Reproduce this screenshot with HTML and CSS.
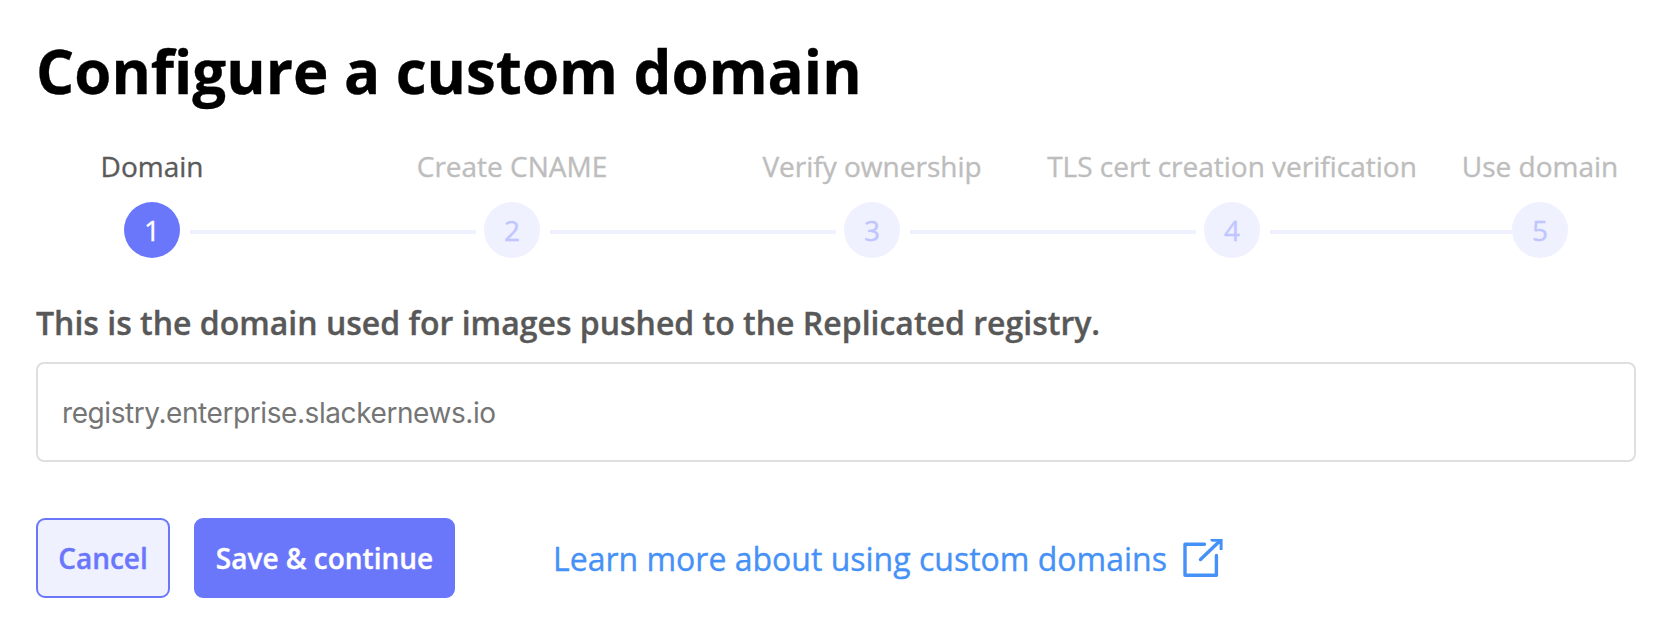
FILE: index.html
```html
<!DOCTYPE html>
<html lang="en">
<head>
<meta charset="utf-8">
<title>Configure a custom domain</title>
<link rel="stylesheet" href="styles.css">
</head>
<body>
<main class="page">
  <h1 class="title">Configure a custom domain</h1>
  <ol class="steps">
    <li class="step step-active"><span class="step-label">Domain</span><div class="step-track"><span class="step-dot">1</span><span class="step-line"></span></div></li>
    <li class="step"><span class="step-label">Create CNAME</span><div class="step-track"><span class="step-dot">2</span><span class="step-line"></span></div></li>
    <li class="step"><span class="step-label">Verify ownership</span><div class="step-track"><span class="step-dot">3</span><span class="step-line"></span></div></li>
    <li class="step step-short"><span class="step-label">TLS cert creation verification</span><div class="step-track"><span class="step-dot">4</span><span class="step-line"></span></div></li>
    <li class="step step-last"><span class="step-label">Use domain</span><div class="step-track"><span class="step-dot">5</span></div></li>
  </ol>
  <label class="field-label" for="domain">This is the domain used for images pushed to the Replicated registry.</label>
  <input class="field" id="domain" type="text" placeholder="registry.enterprise.slackernews.io">
  <div class="actions">
    <button class="button button-secondary" type="button">Cancel</button>
    <button class="button button-primary" type="button">Save &amp; continue</button>
    <a class="link" href="#"><span class="link-text">Learn more about using custom domains</span>
      <svg class="link-icon" viewBox="0 0 40 40" width="40" height="40" fill="none" stroke="currentColor" stroke-width="3.4" stroke-linecap="round" stroke-linejoin="round">
        <path d="M21.5 6.2H2V37.2H33.4V17.5"/>
        <path d="M17.5 21.5L36 3.7"/>
        <path d="M27.3 1H39.6V12H36.6V5.9L34 3.8H29Q27.3 3.2 27.3 1Z" fill="currentColor" stroke="none"/>
      </svg>
    </a>
  </div>
</main>
</body>
</html>
```
FILE: styles.css
```css
* { box-sizing: border-box; }
body { margin: 0; background: #fff; color: #000; font-family: "Open Sans", sans-serif; -webkit-text-stroke: 0.35px currentColor; }
.page { display: flex; flex-direction: column; height: 624px; padding: 31px 34px 0 36px; }
.title { margin: 0; font-size: 60px; font-weight: 700; line-height: 80px; }
.steps { display: flex; margin: 35px 0 0; padding: 0 0 0 88px; list-style: none; }
.step { width: 360px; flex: none; font-size: 28px; line-height: 40px; color: #bdbdbd; }
.step-short { width: 308px; }
.step-last { width: 56px; }
.step-active { color: #5a5a5a; }
.step-label { display: flex; justify-content: center; width: 56px; white-space: nowrap; }
.step-track { display: flex; align-items: flex-start; margin-top: 16px; }
.step-dot { display: flex; align-items: center; justify-content: center; flex: none; width: 56px; height: 56px; border-radius: 50%; background: #eff1ff; color: #c1c5ff; }
.step-active .step-dot { background: #6a77fb; color: #fff; }
.step-line { flex: 1; height: 4px; margin: 28px 8px 0 10px; background: #eff1ff; }
.step-short .step-line { margin-right: 0; }
.field-label { margin-top: 43px; font-size: 32px; font-weight: 600; line-height: 44px; color: #585858; white-space: nowrap; }
.field { width: 1600px; height: 100px; margin-top: 17px; padding: 2px 24px 0; border: 2px solid #dfdfdf; border-radius: 8px; background: #fff; font-family: Inter, sans-serif; font-size: 28px; letter-spacing: -0.42px; -webkit-text-stroke: 0; }
.field::placeholder { color: #757575; opacity: 1; }
.actions { display: flex; align-items: center; margin-top: 56px; }
.button { height: 80px; padding: 0; border: 2px solid #6a77fb; border-radius: 9px; font-family: "Open Sans", sans-serif; font-size: 28px; font-weight: 600; line-height: 40px; white-space: nowrap; }
.button-secondary { width: 134px; background: #eff1ff; color: #6a77fb; }
.button-primary { width: 261px; margin-left: 24px; background: #6a77fb; color: #fff; }
.link { display: flex; align-items: center; margin-left: 98px; color: #4591f7; font-size: 32px; line-height: 44px; text-decoration: none; white-space: nowrap; }
.link-text { padding-top: 2px; }
.link-icon { margin-left: 16px; }
```
